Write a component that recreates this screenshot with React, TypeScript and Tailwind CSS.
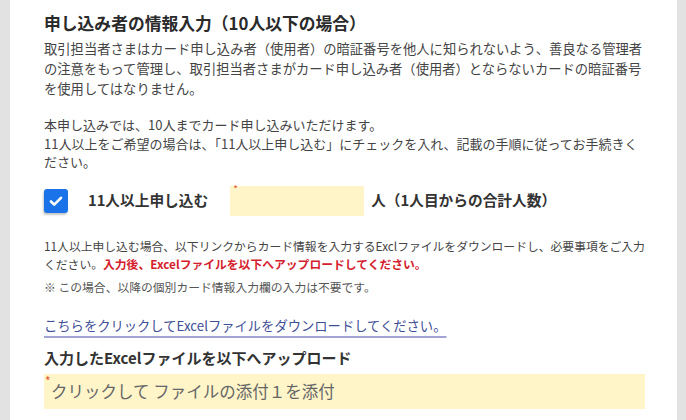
const font = { fontFamily: '"Noto Sans CJK JP", "Noto Sans", sans-serif' };

const CheckIcon = () => (
  <svg width="16" height="16" viewBox="0 0 16 16" fill="none">
    <path d="M3 8.5l3.2 3.2L13 4.8" stroke="#fff" strokeWidth="2.6" strokeLinecap="round" strokeLinejoin="round" />
  </svg>
);

export default function App() {
  return (
    <div className="min-h-[420px] bg-[#e2e2e2] pl-[10px]" style={font}>
      <div className="min-h-[420px] w-[667px] bg-white pl-[34px] pr-[32px] pt-[11px] text-[#333]">
        <h1 className="text-[16.8px] leading-[24px] font-bold text-[#2a2a2a]">
          申し込み者の情報入力（10人以下の場合）
        </h1>

        <p className="mt-[4px] whitespace-nowrap text-[13.3px] leading-[20px] text-[#444]">
          取引担当者さまはカード申し込み者（使用者）の暗証番号を他人に知られないよう、善良なる管理者<br />
          の注意をもって管理し、取引担当者さまがカード申し込み者（使用者）とならないカードの暗証番号<br />
          を使用してはなりません。
        </p>

        <p className="mt-[17px] whitespace-nowrap text-[13px] leading-[18.5px] text-[#444]">
          本申し込みでは、10人までカード申し込みいただけます。<br />
          11人以上をご希望の場合は、「11人以上申し込む」にチェックを入れ、記載の手順に従ってお手続きく<br />
          ださい。
        </p>

        <div className="mt-[14px] flex h-[30px] items-center">
          <div className="flex h-[24px] w-[24px] items-center justify-center rounded-[3px] bg-[#1a73e8] shadow-[-1px_2px_2px_rgba(0,0,0,0.22)]">
            <CheckIcon />
          </div>
          <span className="ml-[20px] text-[14.7px] font-bold text-[#333]">11人以上申し込む</span>
          <div className="relative ml-[22px] h-[30px] w-[134px] bg-[#fff5c9]">
            <span className="absolute left-[3px] top-[-2px] text-[10px] leading-[10px] text-[#e8532c]">*</span>
          </div>
          <span className="ml-[7px] text-[14.7px] font-bold text-[#333]">人（1人目からの合計人数）</span>
        </div>

        <p className="mt-[21px] whitespace-nowrap text-[11.8px] leading-[18px] text-[#444]">
          11人以上申し込む場合、以下リンクからカード情報を入力するExclファイルをダウンロードし、必要事項をご入力<br />
          ください。<span className="font-bold text-[#d4202c]">入力後、Excelファイルを以下へアップロードしてください。</span>
        </p>

        <p className="mt-[5px] text-[11.8px] leading-[18px] text-[#555]">
          ※ この場合、以降の個別カード情報入力欄の入力は不要です。
        </p>

        <p className="mt-[20px] text-[13.3px] leading-[20px]">
          <a href="#" className="text-[#3f4f96] underline decoration-[#a3a3d6] decoration-2 underline-offset-[5px]">
            こちらをクリックしてExcelファイルをダウンロードしてください。
          </a>
        </p>

        <h2 className="mt-[11px] text-[15px] leading-[22px] font-bold text-[#333]">
          入力したExcelファイルを以下へアップロード
        </h2>

        <div className="relative mt-[5px] flex h-[35px] w-[601px] items-center bg-[#fff5c9] pl-[7px]">
          <span className="absolute left-[1px] top-[1px] text-[12px] leading-[12px] text-[#e8532c]">*</span>
          <span className="text-[16.5px] text-[#666]">クリックして ファイルの添付１を添付</span>
        </div>
      </div>
    </div>
  );
}
